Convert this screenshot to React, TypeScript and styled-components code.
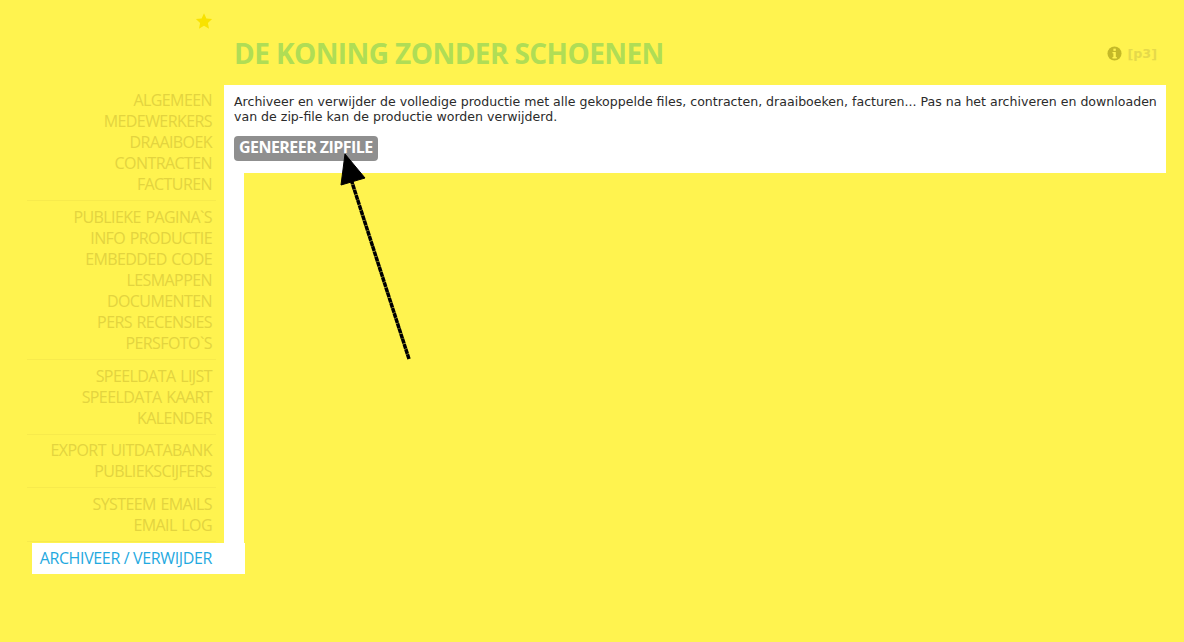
import styled, { createGlobalStyle } from 'styled-components';
import { Fragment } from 'react';

const GlobalStyle = createGlobalStyle`
  html, body {
    margin: 0;
    padding: 0;
    background: #fff34f;
    overflow: hidden;
  }
`;

const Page = styled.div`
  position: relative;
  width: 1184px;
  height: 642px;
  display: grid;
  grid-template-columns: 224px 942px;
  grid-template-rows: 85px 1fr;
  background: #fff34f;
  font-family: 'Open Sans', 'Noto Sans', sans-serif;
`;

const StarSlot = styled.div`
  display: flex;
  justify-content: flex-end;
  padding: 12px 11px 0 0;
  box-sizing: border-box;
`;

const Header = styled.header`
  display: flex;
  align-items: flex-start;
  justify-content: space-between;
  padding: 34px 9px 0 10px;
`;

const Title = styled.h1`
  margin: 0;
  font-size: 28px;
  line-height: 38px;
  font-weight: 700;
  letter-spacing: -0.58px;
  color: #b0dd55;
  white-space: nowrap;
`;

const PageCode = styled.div`
  display: flex;
  align-items: center;
  gap: 5px;
  height: 38px;
  font-family: 'DejaVu Sans', sans-serif;
  font-size: 12.7px;
  font-weight: 700;
  color: #e5d94a;
`;

const Sidebar = styled.nav`
  display: flex;
  flex-direction: column;
  padding: 5px 0 0 27px;
`;

const Item = styled.a`
  display: block;
  height: 21px;
  line-height: 21px;
  padding-right: 12px;
  text-align: right;
  font-size: 16px;
  letter-spacing: -0.58px;
  word-spacing: 1px;
  color: #e3d43f;
  white-space: nowrap;
`;

const Divider = styled.div<{ $last?: boolean }>`
  height: 1px;
  margin: 5px 8px ${(p) => (p.$last ? '1px' : '5.75px')} 0;
  background: #f7ea4c;
`;

const ActiveItem = styled.a`
  display: block;
  box-sizing: border-box;
  height: 31px;
  line-height: 31px;
  width: 213px;
  margin-left: 5px;
  padding-right: 33px;
  text-align: right;
  font-size: 16px;
  letter-spacing: -0.36px;
  color: #1fa9e0;
  background: #fff;
  white-space: nowrap;
  position: relative;
`;

const Content = styled.main`
  display: flex;
  flex-direction: column;
`;

const Panel = styled.section`
  box-sizing: border-box;
  height: 88px;
  padding: 9px 9px 0 10px;
  background: #fff;
`;

const Intro = styled.p`
  margin: 0;
  font-family: 'DejaVu Sans', sans-serif;
  font-size: 12.57px;
  line-height: 15px;
  color: #2b2b2b;
`;

const ZipButton = styled.button`
  display: block;
  height: 25px;
  margin-top: 12px;
  padding: 0 5px 2px;
  border: 0;
  border-radius: 4px;
  background: #8f8f8f;
  color: #fff;
  font-family: 'Open Sans', 'Noto Sans', sans-serif;
  font-size: 16px;
  font-weight: 700;
  letter-spacing: -0.55px;
  line-height: 23px;
  white-space: nowrap;
`;

const Strip = styled.div`
  width: 20px;
  height: 370px;
  background: #fff;
`;

const Arrow = styled.svg`
  position: absolute;
  left: 330px;
  top: 145px;
  width: 90px;
  height: 225px;
`;

const groups = [
  ['ALGEMEEN', 'MEDEWERKERS', 'DRAAIBOEK', 'CONTRACTEN', 'FACTUREN'],
  ['PUBLIEKE PAGINA`S', 'INFO PRODUCTIE', 'EMBEDDED CODE', 'LESMAPPEN', 'DOCUMENTEN', 'PERS RECENSIES', 'PERSFOTO`S'],
  ['SPEELDATA LIJST', 'SPEELDATA KAART', 'KALENDER'],
  ['EXPORT UITDATABANK', 'PUBLIEKSCIJFERS'],
  ['SYSTEEM EMAILS', 'EMAIL LOG'],
];

export default function App() {
  return (
    <Page>
      <GlobalStyle />
      <StarSlot>
        <svg width="18" height="18" viewBox="0 0 24 24" aria-hidden="true">
          <path
            fill="#f8e200"
            d="M12 1.5l3.2 7 7.6.9-5.6 5.2 1.5 7.6L12 18.4l-6.700 3.800 1.500-7.600L1.200 9.400l7.600-.9z"
          />
        </svg>
      </StarSlot>
      <Header>
        <Title>DE KONING ZONDER SCHOENEN</Title>
        <PageCode>
          <svg width="15" height="15" viewBox="0 0 16 16" aria-hidden="true">
            <circle cx="8" cy="8" r="7.500" fill="#c4b928" />
            <rect x="6.800" y="2.800" width="2.600" height="2.400" fill="#fff34f" />
            <path fill="#fff34f" d="M5.800 6.400h3.600v5.400h1v1.400H5.800v-1.400h1V7.800h-1z" />
          </svg>
          [p3]
        </PageCode>
      </Header>
      <Sidebar>
        {groups.map((group, i) => (
          <Fragment key={group[0]}>
            {group.map((label) => (
              <Item key={label}>{label}</Item>
            ))}
            <Divider $last={i === groups.length - 1} />
          </Fragment>
        ))}
        <ActiveItem>ARCHIVEER / VERWIJDER</ActiveItem>
      </Sidebar>
      <Content>
        <Panel>
          <Intro>
            Archiveer en verwijder de volledige productie met alle gekoppelde files, contracten, draaiboeken,
            facturen... Pas na het archiveren en downloaden van de zip-file kan de productie worden verwijderd.
          </Intro>
          <ZipButton>GENEREER ZIPFILE</ZipButton>
        </Panel>
        <Strip />
      </Content>
      <Arrow viewBox="0 0 90 225" aria-hidden="true">
        <path d="M79 214L19 28" stroke="#000" strokeWidth="3.500" strokeDasharray="5 0.400" fill="none" />
        <path d="M15 9L35 33L11 40z" fill="#000" stroke="#000" strokeWidth="1" strokeLinejoin="round" />
      </Arrow>
    </Page>
  );
}
